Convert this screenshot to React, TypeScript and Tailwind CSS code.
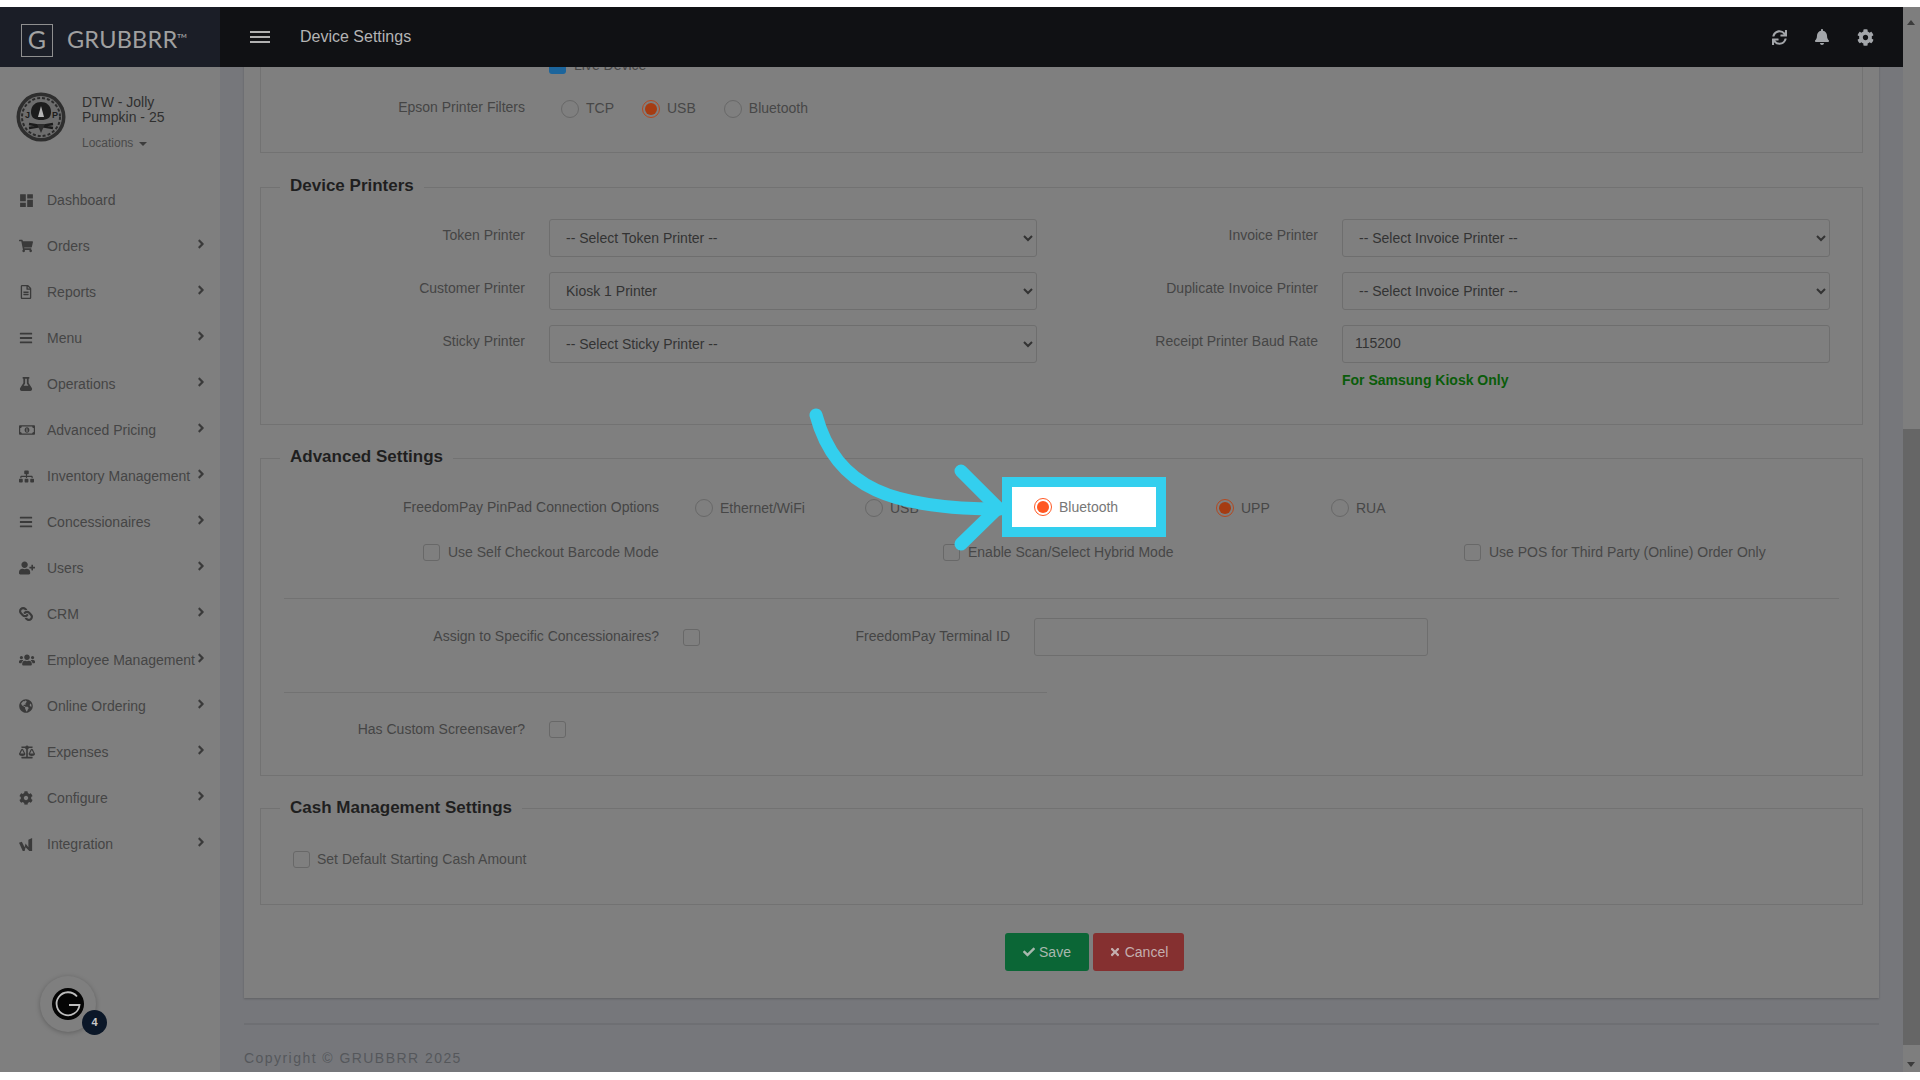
import type { ReactNode } from "react"
import { MdDashboard } from "react-icons/md"
import {
  FaAngleRight,
  FaBalanceScale,
  FaBars,
  FaBell,
  FaCheck,
  FaCog,
  FaFlask,
  FaGlobeAmericas,
  FaLink,
  FaRegFileAlt,
  FaRegMoneyBillAlt,
  FaShoppingCart,
  FaSitemap,
  FaSync,
  FaTimes,
  FaUserPlus,
  FaUsers,
} from "react-icons/fa"

function IntegrationIcon() {
  return (
    <svg viewBox="0 0 16 16" className="h-[15px] w-[15px]" fill="currentColor">
      <path d="M0 6l3-1 3 6 1-4 3 4V3l4-2v14h-3l-4-4-1 4H4z" />
    </svg>
  )
}

const menuItems: { label: string; icon: ReactNode; arrow?: boolean }[] = [
  { label: "Dashboard", icon: <MdDashboard size={17} className="-ml-[1px]" /> },
  { label: "Orders", icon: <FaShoppingCart size={14} />, arrow: true },
  { label: "Reports", icon: <FaRegFileAlt size={14} />, arrow: true },
  { label: "Menu", icon: <FaBars size={14} />, arrow: true },
  { label: "Operations", icon: <FaFlask size={14} />, arrow: true },
  { label: "Advanced Pricing", icon: <FaRegMoneyBillAlt size={16} />, arrow: true },
  { label: "Inventory Management", icon: <FaSitemap size={15} />, arrow: true },
  { label: "Concessionaires", icon: <FaBars size={14} />, arrow: true },
  { label: "Users", icon: <FaUserPlus size={16} />, arrow: true },
  { label: "CRM", icon: <FaLink size={14} className="rotate-90" />, arrow: true },
  { label: "Employee Management", icon: <FaUsers size={16} />, arrow: true },
  { label: "Online Ordering", icon: <FaGlobeAmericas size={14} />, arrow: true },
  { label: "Expenses", icon: <FaBalanceScale size={16} />, arrow: true },
  { label: "Configure", icon: <FaCog size={14} />, arrow: true },
  { label: "Integration", icon: <IntegrationIcon />, arrow: true },
]

function Avatar() {
  return (
    <svg viewBox="0 0 50 50" className="h-[50px] w-[50px] shrink-0">
      <circle cx="25" cy="25" r="24.5" fill="#2e2e2e" />
      <circle cx="25" cy="25" r="21" fill="#6d6d6d" />
      <circle cx="25" cy="25" r="19" fill="none" stroke="#2b2b2b" strokeWidth="2" strokeDasharray="3 2" />
      <path d="M15 20c0-7 5-10 10-10s10 3 10 10c0 6-4 8-10 8s-10-2-10-8z" fill="#1c1c1c" />
      <path d="M22 25l3-11 3 11z" fill="#b5b5b5" />
      <path d="M13 36l24-4M13 32l24 4" stroke="#1c1c1c" strokeWidth="2.5" />
      <path d="M21 32h8l-4 9z" fill="#2e2e2e" />
      <text x="9" y="26" fontSize="9" fontWeight="700" fill="#1c1c1c" fontFamily="Liberation Sans, sans-serif">J</text>
      <text x="36" y="26" fontSize="9" fontWeight="700" fill="#1c1c1c" fontFamily="Liberation Sans, sans-serif">P</text>
    </svg>
  )
}

function Sidebar() {
  return (
    <aside className="relative w-[220px] shrink-0 bg-[#7f7f7f]">
      <div className="flex h-[110px] gap-[16px] pl-[16px] pt-[25px]">
        <Avatar />
        <div className="pt-[3px]">
          <div className="w-[110px] text-[14px] leading-[15px] text-[#2f2f2f]">DTW - Jolly Pumpkin - 25</div>
          <div className="mt-[11px] flex items-center gap-[6px] text-[12px] leading-[14px] text-[#4a4a4a]">
            Locations
            <span className="mt-[2px] h-0 w-0 border-x-[4px] border-t-[4px] border-x-transparent border-t-[#3c3c3c]" />
          </div>
        </div>
      </div>
      <nav>
        {menuItems.map((item) => (
          <div key={item.label} className="relative flex h-[46px] items-center text-[14px] text-[#454545]">
            <span className="flex w-[47px] shrink-0 pl-[19px] text-[#3a3a3a]">{item.icon}</span>
            <span className="whitespace-nowrap">{item.label}</span>
            {item.arrow && (
              <FaAngleRight size={14} className="absolute left-[194px] top-[14px] text-[#3a3a3a]" />
            )}
          </div>
        ))}
      </nav>
      <div className="absolute left-[40px] top-[909px] flex h-[56px] w-[56px] items-center justify-center rounded-full bg-[#7f7f7f] shadow-[0_1px_5px_rgba(0,0,0,0.25)]">
        <svg viewBox="0 0 32 32" className="h-[32px] w-[32px]">
          <circle cx="16" cy="16" r="16" fill="#050505" />
          <path d="M25 8.5A11.5 11.5 0 1 0 27.5 17H17" fill="none" stroke="#bdbdbd" strokeWidth="1.8" />
        </svg>
        <span className="absolute left-[42px] top-[34px] flex h-[25px] w-[25px] items-center justify-center rounded-full bg-[#0b1728] text-[11px] font-bold text-[#c9c9c9]">
          4
        </span>
      </div>
    </aside>
  )
}

function Header() {
  return (
    <header className="flex h-[60px] shrink-0">
      <div className="flex w-[220px] shrink-0 items-center gap-[14px] bg-[#1b1e27] pl-[21px] pt-[6px]">
        <span className="flex h-[33px] w-[32px] items-center justify-center border border-[#8f8f8f] font-['Lato',sans-serif] text-[25px] text-[#a3a3a3]">
          G
        </span>
        <span className="font-['Lato',sans-serif] text-[23.5px] tracking-[0.2px] text-[#a0a0a0]">
          GRUBBRR<sup className="top-[-10px] align-baseline text-[6px] font-bold">TM</sup>
        </span>
      </div>
      <div className="flex flex-1 items-center bg-[#101114] pl-[30px] pr-[29px] text-[#a3a6aa]">
        <span className="flex w-[20px] flex-col gap-[3px]">
          <i className="h-[2px] bg-[#b0b0b0]" />
          <i className="h-[2px] bg-[#b0b0b0]" />
          <i className="h-[2px] bg-[#b0b0b0]" />
        </span>
        <span className="ml-[30px] text-[16px] text-[#b4b4b4]">Device Settings</span>
        <span className="ml-auto flex items-center gap-[27px]">
          <FaSync size={15} />
          <FaBell size={16} />
          <FaCog size={17} />
        </span>
      </div>
    </header>
  )
}

function Radio({ label, checked, bright }: { label: string; checked?: boolean; bright?: boolean }) {
  const ring = bright ? "border-[#ff5722]" : checked ? "border-[#b5481f]" : "border-[#686868]"
  return (
    <span className={`flex items-center gap-[7px] whitespace-nowrap text-[14px] ${bright ? "text-[#777777]" : "text-[#474747]"}`}>
      <span className={`flex h-[18px] w-[18px] items-center justify-center rounded-full border ${ring}`}>
        {checked && <span className={`h-[12px] w-[12px] rounded-full ${bright ? "bg-[#ff5722]" : "bg-[#a63c12]"}`} />}
      </span>
      {label}
    </span>
  )
}

function Checkbox({ label }: { label?: string }) {
  return (
    <span className="flex items-center gap-[8px] whitespace-nowrap text-[14px] text-[#474747]">
      <span className="h-[17px] w-[17px] shrink-0 rounded-[3px] border border-[#686868]" />
      {label}
    </span>
  )
}

function Field({ children }: { children: ReactNode }) {
  return <span className="pb-[5px] text-right text-[14px] text-[#454545]">{children}</span>
}

function PrinterSelect({ value }: { value: string }) {
  return (
    <select
      defaultValue={value}
      className="h-[38px] w-[488px] rounded-[3px] border border-[#6e6e6e] bg-[#7f7f7f] pl-[12px] pr-[4px] text-[14px] text-[#333333]"
    >
      <option>{value}</option>
    </select>
  )
}

function Section({
  title,
  className,
  legendClass = "",
  children,
}: {
  title: string
  className: string
  legendClass?: string
  children: ReactNode
}) {
  return (
    <fieldset className={`border border-[#727272] ${className}`}>
      <legend className={`ml-[19px] px-[10px] text-[17px] font-bold leading-[20px] text-[#1f1f1f] ${legendClass}`}>{title}</legend>
      {children}
    </fieldset>
  )
}

function Content() {
  return (
    <main className="flex min-w-0 flex-1 flex-col overflow-hidden bg-[#76777b] px-[24px]">
      <div className="-mt-[40px] h-[971px] shrink-0 bg-[#7f7f7f] px-[16px] shadow-[0_1px_2px_rgba(0,0,0,0.2)]">
        <div className="h-[126px] border-x border-b border-[#727272] pl-[288px] pt-[28px]">
          <span className="flex items-center gap-[8px] text-[14px] leading-[20px] text-[#474747]">
            <span className="h-[17px] w-[17px] rounded-[3px] bg-[#1c659c]" />
            Live Device
          </span>
          <div className="-ml-[288px] mt-[22px] flex items-center">
            <span className="w-[264px] pb-[2px] text-right text-[14px] text-[#454545]">Epson Printer Filters</span>
            <span className="ml-[36px] flex gap-[28px]">
              <Radio label="TCP" />
              <Radio label="USB" checked />
              <Radio label="Bluetooth" />
            </span>
          </div>
        </div>

        <Section title="Device Printers" className="mt-[24px] h-[248px]" legendClass="relative -top-[1px]">
          <div className="grid grid-cols-[264px_488px_257px_488px] items-center gap-x-[24px] gap-y-[15px] pt-[22px]">
            <Field>Token Printer</Field>
            <PrinterSelect value="-- Select Token Printer --" />
            <Field>Invoice Printer</Field>
            <PrinterSelect value="-- Select Invoice Printer --" />
            <Field>Customer Printer</Field>
            <PrinterSelect value="Kiosk 1 Printer" />
            <Field>Duplicate Invoice Printer</Field>
            <PrinterSelect value="-- Select Invoice Printer --" />
            <Field>Sticky Printer</Field>
            <PrinterSelect value="-- Select Sticky Printer --" />
            <Field>Receipt Printer Baud Rate</Field>
            <div className="flex h-[38px] w-[488px] items-center rounded-[3px] border border-[#6e6e6e] pb-[1px] pl-[12px] text-[14px] text-[#333333]">
              115200
            </div>
          </div>
          <div className="ml-[1081px] mt-[7px] text-[14px] font-bold leading-[20px] text-[#0a5c0a]">For Samsung Kiosk Only</div>
        </Section>

        <Section title="Advanced Settings" className="mt-[23px] h-[328px]" legendClass="relative -top-[1px]">
          <div className="flex items-center pt-[29px]">
            <span className="w-[398px] pb-[1px] text-right text-[14px] text-[#454545]">FreedomPay PinPad Connection Options</span>
            <span className="ml-[36px] w-[170px]">
              <Radio label="Ethernet/WiFi" />
            </span>
            <span className="w-[351px]">
              <Radio label="USB" />
            </span>
            <span className="w-[115px]">
              <Radio label="UPP" checked />
            </span>
            <Radio label="RUA" />
          </div>
          <div className="mt-[23px] grid grid-cols-[520px_521px_1fr] pl-[162px]">
            <Checkbox label="Use Self Checkout Barcode Mode" />
            <Checkbox label="Enable Scan/Select Hybrid Mode" />
            <Checkbox label="Use POS for Third Party (Online) Order Only" />
          </div>
          <div className="mx-[23px] mt-[35px] h-px bg-[#727272]" />
          <div className="mt-[19px] flex items-center">
            <span className="w-[398px] pb-[1px] text-right text-[14px] text-[#454545]">Assign to Specific Concessionaires?</span>
            <span className="ml-[24px]">
              <Checkbox />
            </span>
            <span className="w-[310px] pb-[1px] text-right text-[14px] text-[#454545]">FreedomPay Terminal ID</span>
            <div className="ml-[24px] h-[38px] w-[394px] rounded-[3px] border border-[#6e6e6e]" />
          </div>
          <div className="ml-[23px] mt-[36px] h-px w-[763px] bg-[#727272]" />
          <div className="mt-[26px] flex items-center">
            <span className="w-[264px] text-right text-[14px] text-[#454545]">Has Custom Screensaver?</span>
            <span className="ml-[24px]">
              <Checkbox />
            </span>
          </div>
        </Section>

        <Section title="Cash Management Settings" className="mt-[22px] h-[107px]">
          <div className="pl-[32px] pt-[31px]">
            <span className="flex items-center gap-[7px] text-[14px] text-[#474747]">
              <span className="h-[17px] w-[17px] shrink-0 rounded-[3px] border border-[#686868]" />
              Set Default Starting Cash Amount
            </span>
          </div>
        </Section>

        <div className="mt-[28px] flex justify-center gap-[4px] pl-[66px]">
          <span className="flex h-[38px] w-[84px] items-center justify-center gap-[4px] rounded-[3px] bg-[#0b6636] text-[14px] text-[#a8b8ae]">
            <FaCheck size={12} /> Save
          </span>
          <span className="flex h-[38px] w-[91px] items-center justify-center gap-[4px] rounded-[3px] bg-[#853030] text-[14px] text-[#c4aeae]">
            <FaTimes size={12} /> Cancel
          </span>
        </div>
      </div>
      <div className="mt-[25px] h-[2px] shrink-0 bg-[#6e6f73]" />
      <div className="mt-[23px] text-[14px] leading-[20px] tracking-[1.45px] text-[#55575b]">Copyright © GRUBBRR 2025</div>
    </main>
  )
}

function Scrollbar() {
  return (
    <div className="relative w-[17px] shrink-0 bg-[#7e7e7e]">
      <span className="absolute left-[4px] top-[13px] h-0 w-0 border-x-[4px] border-b-[5px] border-x-transparent border-b-[#3c3c3c]" />
      <div className="absolute inset-x-0 top-[422px] h-[616px] bg-[#666666]" />
      <span className="absolute bottom-[5px] left-[4px] h-0 w-0 border-x-[4px] border-t-[5px] border-x-transparent border-t-[#3c3c3c]" />
    </div>
  )
}

function Callout() {
  return (
    <>
      <div className="absolute left-[1002px] top-[477px] flex h-[60px] w-[164px] items-center border-[10px] border-[#33cfee] bg-white pl-[22px]">
        <Radio label="Bluetooth" checked bright />
      </div>
      <svg className="absolute left-[800px] top-[400px]" width="210" height="160" viewBox="0 0 210 160" fill="none">
        <path d="M16 15C36 90 95 109 200 109" stroke="#33cfee" strokeWidth="13" strokeLinecap="round" />
        <path
          d="M161 71L198 108L161 144"
          stroke="#33cfee"
          strokeWidth="13"
          strokeLinecap="round"
          strokeLinejoin="miter"
        />
      </svg>
    </>
  )
}

export default function App() {
  return (
    <div className="relative flex h-screen w-full flex-col overflow-hidden bg-white font-['Liberation_Sans',Arial,sans-serif]">
      <div className="h-[7px] shrink-0 bg-white" />
      <div className="flex h-[1065px] shrink-0">
        <div className="flex min-w-0 flex-1 flex-col">
          <Header />
          <div className="flex min-h-0 flex-1">
            <Sidebar />
            <Content />
          </div>
        </div>
        <Scrollbar />
      </div>
      <Callout />
    </div>
  )
}
